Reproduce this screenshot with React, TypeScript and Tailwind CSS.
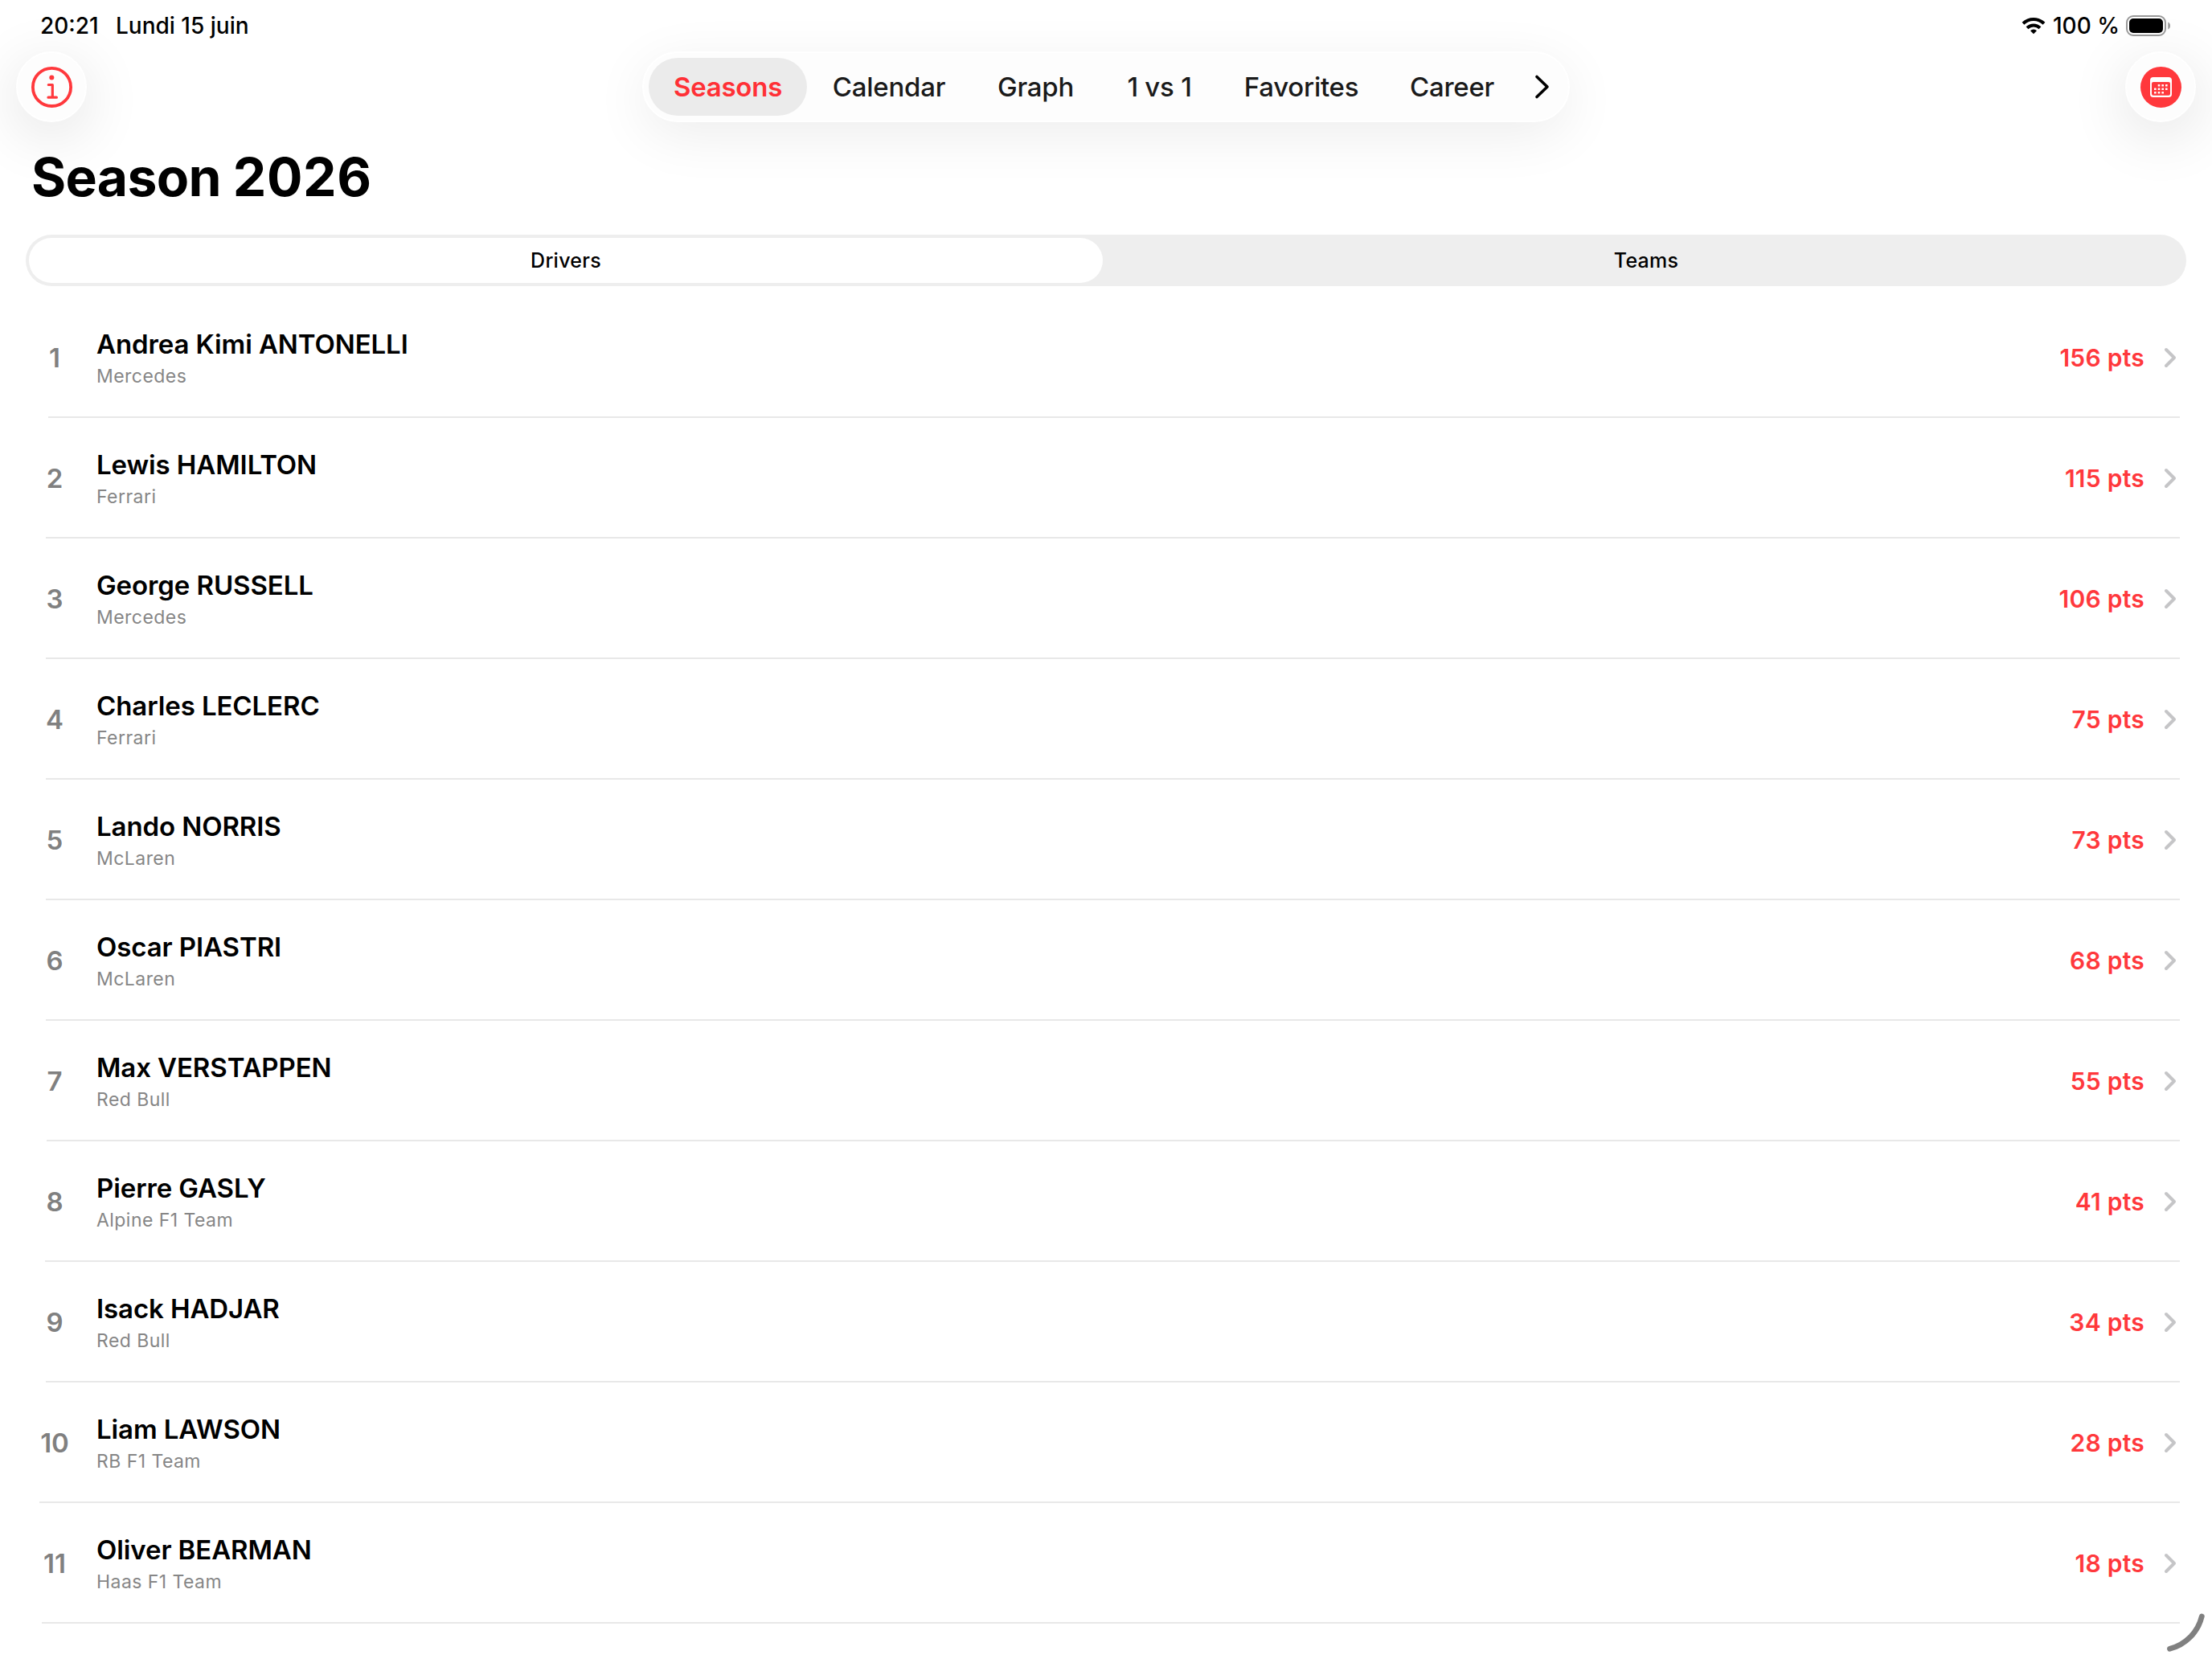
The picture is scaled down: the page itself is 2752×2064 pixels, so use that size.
import clsx from 'clsx'

type Driver = {
  name: string
  team: string
  points: number
  // the separator starts where the position label starts
  line: string
}

const drivers: Driver[] = [
  { name: 'Andrea Kimi ANTONELLI', team: 'Mercedes', points: 156, line: 'ml-[60px]' },
  { name: 'Lewis HAMILTON', team: 'Ferrari', points: 115, line: 'ml-[57px]' },
  { name: 'George RUSSELL', team: 'Mercedes', points: 106, line: 'ml-[57px]' },
  { name: 'Charles LECLERC', team: 'Ferrari', points: 75, line: 'ml-[57px]' },
  { name: 'Lando NORRIS', team: 'McLaren', points: 73, line: 'ml-[57px]' },
  { name: 'Oscar PIASTRI', team: 'McLaren', points: 68, line: 'ml-[57px]' },
  { name: 'Max VERSTAPPEN', team: 'Red Bull', points: 55, line: 'ml-[58px]' },
  { name: 'Pierre GASLY', team: 'Alpine F1 Team', points: 41, line: 'ml-[56px]' },
  { name: 'Isack HADJAR', team: 'Red Bull', points: 34, line: 'ml-[57px]' },
  { name: 'Liam LAWSON', team: 'RB F1 Team', points: 28, line: 'ml-[49px]' },
  { name: 'Oliver BEARMAN', team: 'Haas F1 Team', points: 18, line: 'ml-[52px]' },
]

const tabs = [
  { label: 'Seasons', width: 'w-[197px]' },
  { label: 'Calendar', width: 'w-[204px]' },
  { label: 'Graph', width: 'w-[161px]' },
  { label: '1 vs 1', width: 'w-[147px]' },
  { label: 'Favorites', width: 'w-[206px]' },
  { label: 'Career', width: 'w-[169px]' },
]

// row and column centres of the dots in the calendar glyph
const calendarDots = [
  [42, 42.3], [46.7, 42.3], [51.3, 42.3],
  [37.3, 46.8], [42, 46.8], [46.7, 46.8], [51.3, 46.8],
  [37.3, 51.3], [42, 51.3], [46.7, 51.3],
]

function StatusBar() {
  return (
    <div className="flex h-16 items-center pr-[51px] pl-[50px] text-[28px] font-medium">
      <span className="w-[94px]">20:21</span>
      <span>Lundi 15 juin</span>
      <svg className="ml-auto h-[22px] w-[30px]" viewBox="0 0 30 22" fill="none" stroke="#000" strokeWidth="4">
        <path d="M2 8.3a18.6 18.6 0 0 1 26 0" />
        <path d="M7 13.8a11.5 11.5 0 0 1 16 0" />
        <path d="M15 21.3l-4-4.1a5.8 5.8 0 0 1 8 0z" fill="#000" stroke="none" />
      </svg>
      <span className="mr-[9px] ml-[9px] w-[82px] whitespace-nowrap">100 %</span>
      <svg className="h-[26px] w-[56px]" viewBox="0 0 56 26">
        <rect x="1" y="1" width="48" height="24" rx="8" fill="none" stroke="#999" strokeWidth="2" />
        <rect x="4" y="4" width="42" height="18" rx="5" fill="#000" />
        <path d="M52.3 8.5c1.7.6 2.7 2.3 2.7 4.5s-1 3.9-2.7 4.5z" fill="#999" />
      </svg>
    </div>
  )
}

function InfoButton() {
  return (
    <button className="size-[88px] rounded-full border-2 border-white bg-[#fdfdfd] shadow-[0_16px_76px_rgba(0,0,0,0.12)]">
      <svg className="-m-[2px] size-[88px]" viewBox="0 0 88 88" fill="none" stroke="#ff383c">
        <circle cx="44.5" cy="44.4" r="23.6" strokeWidth="3.8" />
        <circle cx="44.3" cy="32.4" r="3" fill="#ff383c" stroke="none" />
        <path d="M40.3 41.5h5V57M40 57.2h10.4" strokeWidth="3.2" strokeLinecap="round" strokeLinejoin="round" />
      </svg>
    </button>
  )
}

function CalendarButton() {
  return (
    <button className="size-[88px] rounded-full border-2 border-white bg-[#fdfdfd] shadow-[0_16px_76px_rgba(0,0,0,0.12)]">
      <svg className="-m-[2px] size-[88px]" viewBox="0 0 88 88">
        <circle cx="44.5" cy="44.4" r="25.5" fill="#ff383c" />
        <rect x="31" y="32" width="27" height="25" rx="4" fill="#fff" />
        <rect x="33" y="38" width="23" height="16.7" rx="2" fill="#ff383c" />
        {calendarDots.map(([x, y]) => (
          <rect key={`${x}-${y}`} x={x - 1.3} y={y - 1.3} width="2.6" height="2.6" rx="0.5" fill="#fff" />
        ))}
      </svg>
    </button>
  )
}

function TabBar() {
  return (
    <nav className="flex h-[88px] w-[1154px] items-center rounded-full border-2 border-white bg-[#fdfdfd] px-[6px] shadow-[0_16px_68px_rgba(0,0,0,0.075)]">
      {tabs.map(({ label, width }, i) => (
        <button
          key={label}
          className={clsx(
            'h-[72px] shrink-0 rounded-full pt-px text-[33px] tracking-[-0.25px] whitespace-nowrap',
            width,
            i === 0 ? 'bg-[#ebebeb] font-semibold text-[#ff3036]' : 'font-medium text-[#1a1a1a]',
          )}
        >
          {label}
        </button>
      ))}
      <svg className="ml-[17px] h-8 w-[22px]" viewBox="0 0 22 32" fill="none" stroke="#000" strokeWidth="3.6" strokeLinecap="round" strokeLinejoin="round">
        <path d="M4 3.5 17 16 4 28.5" />
      </svg>
    </nav>
  )
}

function SegmentedControl() {
  return (
    <div className="mx-8 grid h-16 grid-cols-2 gap-2 rounded-full bg-[#eeeeee] p-1 text-[25px] font-medium tracking-[0.25px]">
      <button className="rounded-full bg-white pt-[2px]">Drivers</button>
      <button className="rounded-full pt-[2px]">Teams</button>
    </div>
  )
}

function DriverRow({ driver, position }: { driver: Driver; position: number }) {
  return (
    <li>
      <div className="flex h-[148px] items-center pt-[2px] pr-[43px] pl-[38px]">
        <span className="w-[60px] pt-[2px] text-center text-[33px] font-semibold text-[#808080]">{position}</span>
        <div className="ml-[22px]">
          <div className="text-[33px] leading-[44px] font-semibold tracking-[-0.1px]">{driver.name}</div>
          <div className="-mb-px pt-px text-[23px] leading-[34px] tracking-[0.45px] text-[#868686]">{driver.team}</div>
        </div>
        <span className="ml-auto text-[30px] font-semibold tracking-[0.25px] text-[#ff383c]">{driver.points} pts</span>
        <svg className="ml-[23px] h-[26px] w-[18px]" viewBox="0 0 18 26" fill="none" stroke="#c5c5c7" strokeWidth="4" strokeLinecap="round" strokeLinejoin="round">
          <path d="M4 3 14 13 4 23" />
        </svg>
      </div>
      <div className={clsx('mr-10 h-[2px] bg-[#e8e8e8]', driver.line)} />
    </li>
  )
}

export default function App() {
  return (
    <div className="relative h-[2064px] w-[2752px] overflow-hidden bg-white font-['Inter',sans-serif] text-black">
      <StatusBar />
      <header className="flex h-[88px] items-center justify-between px-5">
        <InfoButton />
        <TabBar />
        <CalendarButton />
      </header>

      <h1 className="relative mt-[28px] mb-[32px] pl-[39px] text-[66px] leading-[80px] font-bold tracking-[-0.7px]">
        Season <span className="tracking-[0.6px]">2026</span>
      </h1>

      <SegmentedControl />

      <ul className="mt-[14px]">
        {drivers.map((driver, i) => (
          <DriverRow key={driver.name} driver={driver} position={i + 1} />
        ))}
      </ul>

      {/* corner resize handle */}
      <svg className="absolute right-2 bottom-2 h-[52px] w-[52px]" viewBox="0 0 52 52" fill="none" stroke="#808080" strokeWidth="6.8" strokeLinecap="round">
        <path d="M47.3 7A55 55 0 0 1 7.5 47.3" />
      </svg>
    </div>
  )
}
